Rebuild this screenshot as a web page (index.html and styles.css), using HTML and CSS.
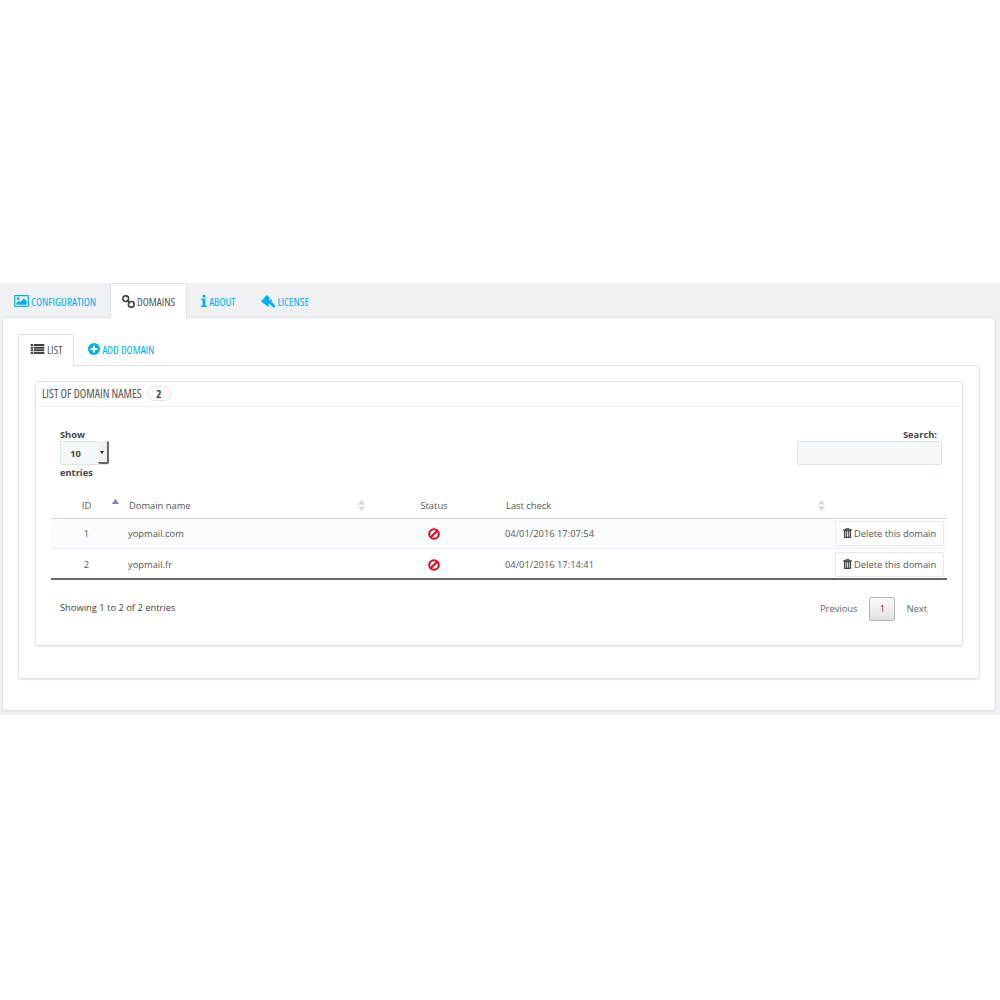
FILE: index.html
```html
<!DOCTYPE html>
<html lang="en">
<head>
<meta charset="utf-8">
<title>Domains</title>
<link rel="stylesheet" href="styles.css">
</head>
<body>
<div class="band">
  <nav class="tabs main-tabs">
    <a class="tab"><svg class="ico pic" viewBox="0 0 16 13"><path fill="#00aff0" fill-rule="evenodd" d="M1.2 0h13.6c.7 0 1.2.5 1.2 1.2v10.6c0 .7-.5 1.2-1.2 1.2H1.2C.5 13 0 12.500 0 11.800V1.200C0 .5.500 0 1.200 0zM1.300 1.300v10.400h13.400V1.300zM2.500 10.500V8.800l2.600-2.600 1.500 1.500 4-4 3 3v3.800zM4.500 2.500a1.500 1.500 0 1 1 0 3 1.500 1.500 0 0 1 0-3z"/></svg>CONFIGURATION</a>
    <a class="tab active"><svg class="ico link" viewBox="0 0 14 14"><g fill="none" stroke="#444" stroke-width="1.800"><rect x="1" y="1" width="6" height="6" rx="2.600"/><rect x="7" y="7" width="6" height="6" rx="2.600"/><path d="M5.500 5.500l3 3"/></g></svg>DOMAINS</a>
    <a class="tab"><svg class="ico info" viewBox="0 0 6 13"><path fill="#00aff0" d="M1.500 0h3v2.600h-3zM0 4h4.500v7.400H6V13H0v-1.600h1.500V5.600H0z"/></svg>ABOUT</a>
    <a class="tab"><svg class="ico gavel" viewBox="0 0 15 13"><path fill="#00aff0" d="M0 6.500L5.800 0l3 2.800-1 1.200 1.400 1.300 1-1 1 1-1 1 4.300 4.700-1.700 2-4.500-4.400-1 1 1 1-1 1.200z"/></svg>LICENSE</a>
  </nav>
  <div class="card">
    <nav class="tabs sub-tabs">
      <a class="tab active"><svg class="ico list" viewBox="0 0 15 11"><path fill="#444" d="M0 0h2.500v2.300H0zM3.300 0H15v2.300H3.300zM0 2.900h2.500v2.300H0zM3.300 2.900H15v2.300H3.300zM0 5.800h2.500v2.300H0zM3.300 5.800H15v2.300H3.300zM0 8.700h2.500V11H0zM3.300 8.700H15V11H3.300z"/></svg>LIST</a>
      <a class="tab"><svg class="ico plus" viewBox="0 0 12 12"><circle cx="6" cy="6" r="6" fill="#00aff0"/><path fill="#fff" d="M5 2.500h2V5h2.500v2H7v2.500H5V7H2.500V5H5z"/></svg>ADD DOMAIN</a>
    </nav>
    <section class="tab-pane">
      <div class="panel">
        <header class="panel-head">LIST OF DOMAIN NAMES <span class="badge">2</span></header>
        <div class="controls">
          <div class="length">
            <div class="label">Show</div>
            <div class="select"><span class="val">10</span><span class="arrow"><i></i></span></div>
            <div class="label">entries</div>
          </div>
          <div class="search">
            <div class="label">Search:</div>
            <div class="input"></div>
          </div>
        </div>
        <table class="grid">
          <colgroup><col class="c1"><col class="c2"><col class="c3"><col class="c4"><col class="c5"></colgroup>
          <thead>
            <tr>
              <th class="center">ID<svg class="sort up" viewBox="0 0 7 5"><path fill="#7a7fc0" d="M3.500 0L7 5H0z"/></svg></th>
              <th>Domain name<svg class="sort both" viewBox="0 0 7 11"><path fill="#d5d8dc" d="M3.500 0L7 4.500H0zM3.500 11L0 6.500h7z"/></svg></th>
              <th class="center">Status</th>
              <th>Last check<svg class="sort both" viewBox="0 0 7 11"><path fill="#d5d8dc" d="M3.500 0L7 4.500H0zM3.500 11L0 6.500h7z"/></svg></th>
              <th></th>
            </tr>
          </thead>
          <tbody>
            <tr class="odd">
              <td class="center">1</td>
              <td>yopmail.com</td>
              <td class="center"><svg class="ban" viewBox="0 0 12 12"><g fill="none" stroke="#e3051b" stroke-width="2"><circle cx="6" cy="6" r="4.800"/><path d="M2.700 9.300l6.600-6.600"/></g></svg></td>
              <td>04/01/2016 17:07:54</td>
              <td class="act"><span class="btn"><svg class="trash" viewBox="0 0 10 11"><path fill="#444" fill-rule="evenodd" d="M3.300 0h3.400l.6 1.400H10v1H9v7.800c0 .5-.3.8-.8.8H1.800c-.5 0-.8-.3-.8-.8V2.400H0v-1h2.700zM4 .8l-.2.600h2.400L6 .8zM2.600 3.500v6.300h.9V3.500zM4.550 3.500v6.300h.9V3.500zM6.500 3.500v6.300h.9V3.500z"/></svg>Delete this domain</span></td>
            </tr>
            <tr>
              <td class="center">2</td>
              <td>yopmail.fr</td>
              <td class="center"><svg class="ban" viewBox="0 0 12 12"><g fill="none" stroke="#e3051b" stroke-width="2"><circle cx="6" cy="6" r="4.800"/><path d="M2.700 9.300l6.600-6.600"/></g></svg></td>
              <td>04/01/2016 17:14:41</td>
              <td class="act"><span class="btn"><svg class="trash" viewBox="0 0 10 11"><path fill="#444" fill-rule="evenodd" d="M3.300 0h3.400l.6 1.400H10v1H9v7.800c0 .5-.3.8-.8.8H1.800c-.5 0-.8-.3-.8-.8V2.400H0v-1h2.700zM4 .8l-.2.600h2.400L6 .8zM2.600 3.500v6.300h.9V3.500zM4.550 3.500v6.300h.9V3.500zM6.500 3.500v6.300h.9V3.500z"/></svg>Delete this domain</span></td>
            </tr>
          </tbody>
        </table>
        <footer class="foot">
          <div class="info-text">Showing 1 to 2 of 2 entries</div>
          <div class="pager"><span>Previous</span><span class="page">1</span><span>Next</span></div>
        </footer>
      </div>
    </section>
  </div>
</div>
</body>
</html>
```

FILE: styles.css
```css
* { box-sizing: border-box; }
html, body { margin: 0; padding: 0; background: #fff; }
body { font-family: "Open Sans", sans-serif; font-size: 10px; color: #555; padding-top: 283px; min-height: 1000px; }
.band { background: #eff1f2; height: 432px; padding: 0 4px 4px 2px; }
.tabs { display: flex; font-family: "Open Sans", sans-serif; font-stretch: 75%; font-size: 11.200px; }
.main-tabs { height: 34px; padding-left: 1px; }
.tab { display: flex; align-items: center; color: #00aff0; white-space: nowrap; border: 1px solid transparent; border-bottom: 0; }
.tab.active { color: #555; background: #fff; border-color: #dfe3e5; border-radius: 2px 2px 0 0; }
.main-tabs .tab { height: 35px; padding: 0 11px 0 10px; position: relative; z-index: 1; }
.main-tabs .tab:nth-child(2) { margin-left: 2px; padding-left: 11px; }
.main-tabs .tab:nth-child(3) { padding: 0 12px 0 13px; }
.main-tabs .tab:nth-child(4) { padding-left: 11px; }
.ico { flex: none; display: block; margin-right: 2px; }
.pic { width: 15px; height: 12px; }
.link { width: 13px; height: 13px; }
.info { width: 6px; height: 12px; }
.gavel { width: 15px; height: 13px; }
.list { width: 15px; height: 10px; }
.plus { width: 12px; height: 12px; }
.card { height: 394px; background: #fff; border: 1px solid #dfe3e5; border-radius: 3px; padding: 16px 15px 0 15px; box-shadow: 0 1px 1px #e4e6e8; }
.sub-tabs { height: 31px; }
.sub-tabs .tab { height: 32px; position: relative; z-index: 1; padding: 0 11px 3px 11px; }
.sub-tabs .tab:nth-child(2) { padding: 0 13px 3px; }
.tab-pane { height: 314px; border: 1px solid #dfe3e5; border-radius: 3px; padding: 15px 16px 0 16px; box-shadow: 0 1px 1px #e8eaec; }
.panel { height: 265px; border: 1px solid #dfe3e5; border-radius: 3px; box-shadow: 0 1px 2px #e4e6e8; padding: 0 15px; }
.panel-head { height: 25px; margin: 0 -15px; padding: 0 0 2px 6px; display: flex; align-items: center; font-family: "Open Sans", sans-serif; font-stretch: 75%; font-size: 11.900px; color: #555; border-bottom: 1px solid #eef0f2; white-space: pre; }
.badge { display: inline-block; width: 24px; height: 15px; margin: 1px 0 0 3px; font-size: 11.200px; line-height: 13px; text-align: center; border: 1px solid #dfe3e5; border-radius: 8px; font-weight: bold; color: #444; }
.controls { display: flex; justify-content: space-between; padding: 21px 5px 0 9px; height: 85px; }
.label { font-size: 9.300px; font-weight: 700; line-height: 12px; color: #444; }
.length .label { height: 13px; line-height: 13px; }
.select { display: flex; width: 49px; height: 24px; margin: 0 0 1px; background: #f5f8f9; border: 1px solid #dbe6e9; border-radius: 2px; font-size: 9.300px; font-weight: 700; color: #444; }
.val { flex: 1; text-align: center; line-height: 24px; padding-right: 8px; }
.arrow { width: 11px; height: 23px; background: #f0f0f0; border-right: 2px solid #666; border-bottom: 2px solid #666; margin: -1px -1px 0 0; border-radius: 2px; position: relative; }
.arrow i { position: absolute; left: 2px; top: 10px; border: 2.500px solid transparent; border-top: 3px solid #222; border-bottom: 0; }
.search { width: 145px; text-align: right; }
.search .label { padding-right: 5px; height: 13px; line-height: 13px; }
.input { height: 24px; background: #f5f8f9; border: 1px solid #dbe6e9; border-radius: 2px; }
.grid { width: 896px; border-collapse: collapse; table-layout: fixed; font-size: 9.350px; color: #555; }
.c1 { width: 71px; } .c2 { width: 247px; } .c3 { width: 130px; } .c4 { width: 330px; } .c5 { width: 118px; }
th { height: 26px; font-weight: 400; text-align: left; padding: 2px 7px 0; position: relative; border-bottom: 1px solid #c5dbe8; }
td { height: 30px; padding: 0 6px; border-bottom: 1px solid #e9eff3; }
tbody tr:last-child td { height: 31px; padding-top: 2px; border-bottom: 2px solid #666; }
.odd td { background: #fafcfd; }
.center { text-align: center; }
.sort { position: absolute; }
.sort.up { width: 7px; height: 5px; right: 3px; top: 7px; }
.sort.both { width: 7px; height: 11px; right: 4px; top: 8px; }
.ban { display: block; width: 12px; height: 12px; margin: 1px auto 0; }
.act { padding: 0 3px 0 6px; }
.btn { display: flex; align-items: center; width: 109px; height: 25px; background: #fff; border: 1px solid #e6e9eb; border-radius: 2px; padding-left: 7px; white-space: nowrap; }
.trash { width: 9px; height: 10px; margin-right: 2px; flex: none; }
.foot { display: flex; justify-content: space-between; align-items: center; height: 55px; padding: 0 20px 0 9px; font-size: 9.350px; }
.info-text { color: #444; }
.pager { display: flex; align-items: center; color: #666; padding-top: 2px; }
.page { width: 26px; height: 24px; margin: 0 11px 0 12px; line-height: 22px; text-align: center; color: #444; background: linear-gradient(#fafafa, #e2e2e2); border: 1px solid #b4b4b4; border-radius: 2px; }
```
